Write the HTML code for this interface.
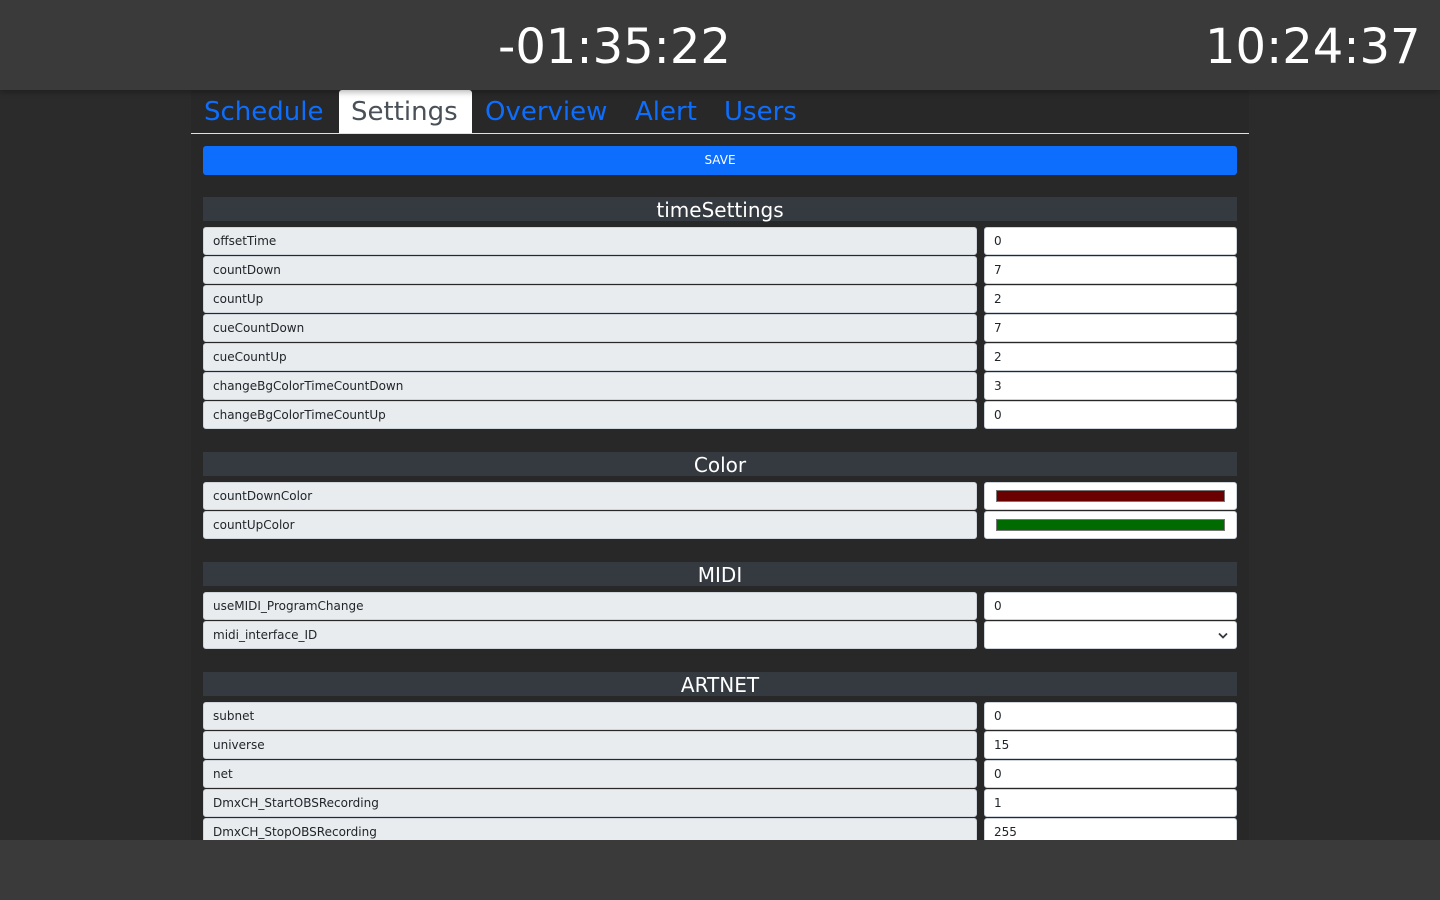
<!DOCTYPE html>
<html><head><meta charset="utf-8"><style>
*{box-sizing:border-box;margin:0;padding:0}
body{width:1440px;height:900px;background:#2b2b2b;font-family:"DejaVu Sans","Liberation Sans",sans-serif;position:relative;overflow:hidden}
.hdr{position:absolute;left:0;top:0;width:1440px;height:90px;background:#3a3a3a;box-shadow:0 2px 6px rgba(0,0,0,.3);z-index:2}
.clk{position:absolute;top:17px;color:#fff;font-size:48px;line-height:60px}
.ftr{position:absolute;left:0;top:840px;width:1440px;height:60px;background:#3a3a3a;z-index:2}
.cont{position:absolute;left:191px;top:90px;width:1058px;height:760px;background:#282828}
.tabs{position:absolute;left:0;top:0;width:1058px;height:44px;border-bottom:1px solid #dee2e6}
.tab{position:absolute;top:1px;height:43px;font-size:26px;line-height:43px;color:#0d6efd}
.tab.act{top:0;background:#fff;color:#495057;border-radius:3px 3px 0 0;line-height:45px}
.save{position:absolute;left:12px;top:56px;width:1034px;height:29px;background:#0d6efd;border-radius:3px;color:#fff;font-size:12px;text-align:center;line-height:29px}
.sh{position:absolute;left:12px;width:1034px;height:24px;background:#343a40;color:#fff;font-size:20px;text-align:center;line-height:26px}
.lab{position:absolute;left:12px;width:774px;height:28px;background:#e9ecef;border:1px solid #ced4da;border-radius:3px;font-size:12px;color:#212529;padding-left:9px;line-height:26px}
.inp{position:absolute;left:793px;width:253px;height:28px;background:#fff;border:1px solid #ced4da;border-radius:3px;font-size:12px;color:#212529;padding-left:9px;line-height:26px}
.sw{position:absolute;left:11px;top:7px;width:229px;height:12px;border:1px solid #777}
</style></head><body>
<div class="hdr">
<div class="clk" style="left:498px">-01:35:22</div>
<div class="clk" style="left:1205px">10:24:37</div>
</div>
<div class="cont">
<div class="tabs">
<div class="tab" style="left:13px">Schedule</div>
<div class="tab act" style="left:148px;width:133px;padding-left:12px">Settings</div>
<div class="tab" style="left:294px">Overview</div>
<div class="tab" style="left:444px">Alert</div>
<div class="tab" style="left:533px">Users</div>
</div>
<div class="save">SAVE</div>

<div class="sh" style="top:107px">timeSettings</div>
<div class="lab" style="top:137px">offsetTime</div><div class="inp" style="top:137px">0</div>
<div class="lab" style="top:166px">countDown</div><div class="inp" style="top:166px">7</div>
<div class="lab" style="top:195px">countUp</div><div class="inp" style="top:195px">2</div>
<div class="lab" style="top:224px">cueCountDown</div><div class="inp" style="top:224px">7</div>
<div class="lab" style="top:253px">cueCountUp</div><div class="inp" style="top:253px">2</div>
<div class="lab" style="top:282px">changeBgColorTimeCountDown</div><div class="inp" style="top:282px">3</div>
<div class="lab" style="top:311px">changeBgColorTimeCountUp</div><div class="inp" style="top:311px">0</div>

<div class="sh" style="top:362px">Color</div>
<div class="lab" style="top:392px">countDownColor</div><div class="inp" style="top:392px"><div class="sw" style="background:#6b0000"></div></div>
<div class="lab" style="top:421px">countUpColor</div><div class="inp" style="top:421px"><div class="sw" style="background:#006b00"></div></div>

<div class="sh" style="top:472px">MIDI</div>
<div class="lab" style="top:502px">useMIDI_ProgramChange</div><div class="inp" style="top:502px">0</div>
<div class="lab" style="top:531px">midi_interface_ID</div><div class="inp" style="top:531px"><svg style="position:absolute;right:8px;top:10px" width="10" height="7" viewBox="0 0 10 7"><path d="M1 1.5L5 5.5L9 1.5" fill="none" stroke="#343a40" stroke-width="1.8"/></svg></div>

<div class="sh" style="top:582px">ARTNET</div>
<div class="lab" style="top:612px">subnet</div><div class="inp" style="top:612px">0</div>
<div class="lab" style="top:641px">universe</div><div class="inp" style="top:641px">15</div>
<div class="lab" style="top:670px">net</div><div class="inp" style="top:670px">0</div>
<div class="lab" style="top:699px">DmxCH_StartOBSRecording</div><div class="inp" style="top:699px">1</div>
<div class="lab" style="top:728px">DmxCH_StopOBSRecording</div><div class="inp" style="top:728px">255</div>
</div>
<div class="ftr"></div>
</body></html>
